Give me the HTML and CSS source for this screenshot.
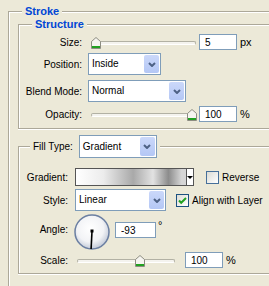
FILE: index.html
```html
<!DOCTYPE html>
<html lang="en">
<head>
    <meta charset="UTF-8">
    <title>Layer Style - Stroke</title>
    <link rel="stylesheet" href="styles.css">
</head>
<body>
<div class="dialog">
    <fieldset class="group group-outer">
        <legend class="title title-main">Stroke</legend>

        <fieldset class="group structure">
            <legend class="title title-sub">Structure</legend>

            <div class="row row-size">
                <span class="lbl">Size:</span>
                <div class="slider">
                    <span class="track"></span>
                    <span class="thumb" style="left:0px"><svg width="10" height="12" viewBox="0 0 10 12"><path d="M.5 4.5L5 .5l4.5 4v7H.5z" fill="#f6f5f0" stroke="#8d8d82"/><path d="M1 9h8v2H1z" fill="#21a121"/></svg></span>
                </div>
                <input class="num" value="5">
                <span class="unit">px</span>
            </div>

            <div class="row row-position">
                <span class="lbl">Position:</span>
                <div class="combo combo-position">
                    <span class="val">Inside</span>
                    <span class="btn"><svg width="8" height="5" viewBox="0 0 8 5"><path d="M1 1l3 3 3-3" fill="none" stroke="#4d6185" stroke-width="2"/></svg></span>
                </div>
            </div>

            <div class="row row-blend">
                <span class="lbl">Blend Mode:</span>
                <div class="combo combo-blend">
                    <span class="val">Normal</span>
                    <span class="btn"><svg width="8" height="5" viewBox="0 0 8 5"><path d="M1 1l3 3 3-3" fill="none" stroke="#4d6185" stroke-width="2"/></svg></span>
                </div>
            </div>

            <div class="row row-opacity">
                <span class="lbl">Opacity:</span>
                <div class="slider">
                    <span class="track"></span>
                    <span class="thumb" style="left:96px"><svg width="10" height="12" viewBox="0 0 10 12"><path d="M.5 4.5L5 .5l4.5 4v7H.5z" fill="#f6f5f0" stroke="#8d8d82"/><path d="M1 9h8v2H1z" fill="#21a121"/></svg></span>
                </div>
                <input class="num" value="100">
                <span class="unit">%</span>
            </div>
        </fieldset>

        <fieldset class="group fill">
            <legend class="fill-type">
                <span>Fill Type:</span>
                <div class="combo combo-fill">
                    <span class="val">Gradient</span>
                    <span class="btn"><svg width="8" height="5" viewBox="0 0 8 5"><path d="M1 1l3 3 3-3" fill="none" stroke="#4d6185" stroke-width="2"/></svg></span>
                </div>
            </legend>

            <div class="row row-gradient">
                <span class="lbl">Gradient:</span>
                <div class="gradient">
                    <span class="ramp"></span>
                    <span class="ramp-arrow"></span>
                </div>
                <span class="check check-reverse"></span>
                <span class="check-text">Reverse</span>
            </div>

            <div class="row row-style">
                <span class="lbl">Style:</span>
                <div class="combo combo-style">
                    <span class="val">Linear</span>
                    <span class="btn"><svg width="8" height="5" viewBox="0 0 8 5"><path d="M1 1l3 3 3-3" fill="none" stroke="#4d6185" stroke-width="2"/></svg></span>
                </div>
                <span class="check check-align"><svg width="11" height="11" viewBox="0 0 11 11"><path d="M2 5.5l2.2 2.3L9 3" fill="none" stroke="#21a121" stroke-width="2"/></svg></span>
                <span class="check-text">Align with Layer</span>
            </div>

            <div class="row row-angle">
                <span class="lbl">Angle:</span>
                <span class="dial"><svg width="36" height="36" viewBox="0 0 36 36">
                    <defs>
                        <radialGradient id="dialFill" cx="45%" cy="40%" r="60%">
                            <stop offset="0" stop-color="#ffffff"/>
                            <stop offset=".65" stop-color="#f2f3f6"/>
                            <stop offset="1" stop-color="#c3cad8"/>
                        </radialGradient>
                    </defs>
                    <circle cx="18" cy="18" r="17" fill="url(#dialFill)" stroke="#6b7fa2" stroke-width="1.5"/>
                    <line x1="18" y1="17" x2="17.1" y2="35" stroke="#000" stroke-width="1.6"/>
                    <rect x="16.5" y="15.5" width="3" height="3" fill="#000"/>
                </svg></span>
                <input class="num num-angle" value="-93">
                <span class="unit">°</span>
            </div>

            <div class="row row-scale">
                <span class="lbl">Scale:</span>
                <div class="slider slider-scale">
                    <span class="track"></span>
                    <span class="thumb" style="left:58px"><svg width="10" height="12" viewBox="0 0 10 12"><path d="M.5 4.5L5 .5l4.5 4v7H.5z" fill="#f6f5f0" stroke="#8d8d82"/><path d="M1 9h8v2H1z" fill="#21a121"/></svg></span>
                </div>
                <input class="num num-scale" value="100">
                <span class="unit">%</span>
            </div>
        </fieldset>
    </fieldset>
</div>
</body>
</html>
```

FILE: styles.css
```css
:root {
    --bg-color: #ece9d8;
    --line-color: #aca899;
    --field-border: #7f9db9;
    --title-color: #0046d5;
}

body {
    margin: 0;
    background-color: var(--bg-color);
    color: #000;
    font-family: "Liberation Sans", Arial, sans-serif;
    font-size: 10px;
}

.dialog {
    width: 269px;
    height: 286px;
    overflow: hidden;
}

.group {
    margin: 0;
    padding: 0;
    min-inline-size: 0;
    border: 1px solid var(--line-color);
    box-shadow: inset 1px 1px 0 #fff, 0 1px 0 #fff;
}

.group-outer {
    margin: 5px 0 0 8px;
    padding: 0 0 0 9px;
    width: 320px;
    height: 320px;
}

.title {
    padding: 0 3px;
    font-size: 11px;
    font-weight: bold;
    color: var(--title-color);
    background-color: var(--bg-color);
}

.title-main {
    margin-left: 4px;
    line-height: 12px;
}

.title-sub {
    margin-left: 13px;
    line-height: 14px;
}

.structure {
    width: 300px;
    padding-bottom: 6px;
}

.row {
    display: flex;
    align-items: center;
}

.lbl {
    text-align: right;
    white-space: nowrap;
}

.structure .lbl {
    width: 63px;
    margin-right: 6px;
}

.fill .lbl {
    width: 49px;
    margin-right: 7px;
}

.row-size {
    margin-top: 3px;
    height: 16px;
}

.row-position {
    margin-top: 3px;
}

.row-blend {
    margin-top: 5px;
}

.row-opacity {
    margin-top: 4px;
    height: 16px;
}

/* sliders */

.slider {
    position: relative;
    width: 105px;
    height: 16px;
    margin-left: 3px;
}

.slider-scale {
    width: 98px;
    margin-left: 2px;
}

.track {
    position: absolute;
    left: 0;
    right: 0;
    top: 7px;
    height: 4px;
    box-sizing: border-box;
    border: 1px solid #b2b1a4;
    border-bottom-color: #fff;
    border-radius: 2px;
    background-color: #f4f3ee;
}

.thumb {
    position: absolute;
    top: 3px;
    width: 10px;
    height: 12px;
}

.thumb svg {
    display: block;
}

/* text fields */

.num {
    box-sizing: border-box;
    width: 38px;
    height: 16px;
    margin: 0 0 0 3px;
    padding: 0 0 0 5px;
    border: 1px solid var(--field-border);
    background-color: #fff;
    font-family: inherit;
    font-size: 10px;
    color: #000;
    outline: none;
}

.unit {
    margin-left: 3px;
    font-size: 11px;
}

/* combo boxes */

.combo {
    display: flex;
    box-sizing: border-box;
    height: 22px;
    border: 1px solid var(--field-border);
    background-color: #fff;
}

.combo .val {
    flex: 1;
    padding-left: 3px;
    line-height: 20px;
    white-space: nowrap;
}

.combo .btn {
    display: flex;
    align-items: center;
    justify-content: center;
    width: 15px;
    margin: 1px;
    border-radius: 2px;
    background: linear-gradient(#cbd8fa, #b4c7f5);
}

.combo-position {
    width: 73px;
}

.combo-blend {
    width: 98px;
}

.combo-fill {
    width: 78px;
    height: 23px;
    margin-left: 6px;
}

.combo-fill .val {
    line-height: 21px;
}

.combo-style {
    width: 91px;
}

/* fill group */

.fill {
    width: 300px;
    margin-top: 6px;
    padding-bottom: 5px;
}

.fill-type {
    display: flex;
    align-items: center;
    margin-left: 11px;
    padding: 0 3px;
    background-color: var(--bg-color);
}

.row-gradient {
    margin-top: 10px;
}

.gradient {
    display: flex;
    box-sizing: border-box;
    width: 119px;
    height: 18px;
    border: 1px solid #555;
}

.ramp {
    flex: 1;
    background: linear-gradient(to right, #fff 0%, #ececec 25%, #a9a9a9 52%, #e2e2e2 70%, #8c8c8c 84%, #d6d6d6 96%);
}

.ramp-arrow {
    position: relative;
    width: 6px;
    border-left: 1px solid #555;
    background-color: #fff;
}

.ramp-arrow:after {
    content: "";
    position: absolute;
    left: 0;
    top: 7px;
    border-left: 3px solid transparent;
    border-right: 3px solid transparent;
    border-top: 3px solid #000;
}

.check {
    display: flex;
    align-items: center;
    justify-content: center;
    box-sizing: border-box;
    width: 13px;
    height: 13px;
    border: 1px solid #1c5180;
    background: linear-gradient(135deg, #dcdcd5, #fff);
}

.check-reverse {
    margin-left: 12px;
    border-color: #47709a;
}

.check-align {
    margin-left: 10px;
}

.check-text {
    margin-left: 3px;
    white-space: nowrap;
}

.row-style {
    margin-top: 3px;
}

.row-angle {
    align-items: flex-start;
    margin-top: 3px;
}

.row-angle .lbl {
    margin-top: 8px;
    line-height: 16px;
}

.dial {
    display: block;
    width: 36px;
    height: 36px;
    margin-left: -1px;
}

.dial svg {
    display: block;
}

.num-angle {
    width: 41px;
    margin: 8px 0 0 5px;
}

.row-angle .unit {
    margin: 5px 0 0 2px;
}

.row-scale {
    margin-top: 2px;
    height: 16px;
}

.num-scale {
    margin-left: 10px;
}
```
